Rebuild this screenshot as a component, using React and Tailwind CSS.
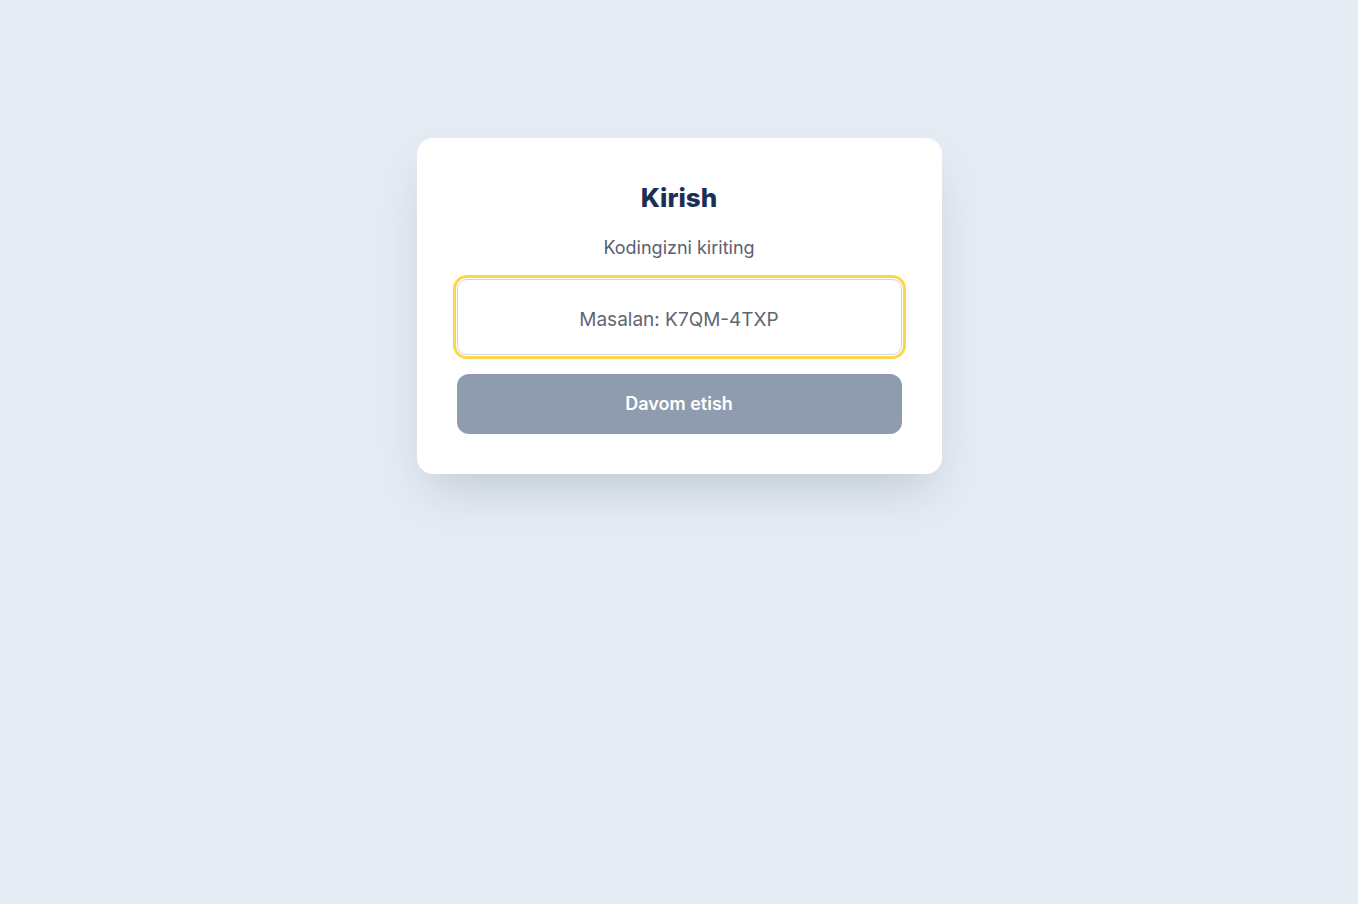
import React, { useState } from 'react';

const App = () => {
  const [code, setCode] = useState('');

  return (
    <div className="min-h-screen bg-[#e5ecf4] pt-[138px] font-['Inter',sans-serif]">
      <div className="mx-auto w-[525px] rounded-2xl bg-white p-10 shadow-[0_24px_50px_-12px_rgba(100,116,139,0.3)]">
        <h1 className="text-center text-[26px] font-extrabold leading-10 text-[#1b2f55]">Kirish</h1>
        <p className="mt-4 text-center text-lg leading-7 text-[#5b6170]">Kodingizni kiriting</p>

        <input
          type="text"
          value={code}
          onChange={(e) => setCode(e.target.value)}
          placeholder="Masalan: K7QM-4TXP"
          className="mt-[17px] block h-[76px] w-full rounded-[10px] border border-[#cbd5e1] bg-white pt-1 text-center text-[19px] text-[#374151] outline-[3px] outline-offset-[1px] outline-solid outline-[#fdd64a] placeholder:text-[#5f6673]"
        />

        <button
          type="button"
          className="mt-[19px] block h-[60px] w-full rounded-xl bg-[#8f9caf] text-lg font-semibold text-white"
        >
          Davom etish
        </button>
      </div>
    </div>
  );
};

export default App;
